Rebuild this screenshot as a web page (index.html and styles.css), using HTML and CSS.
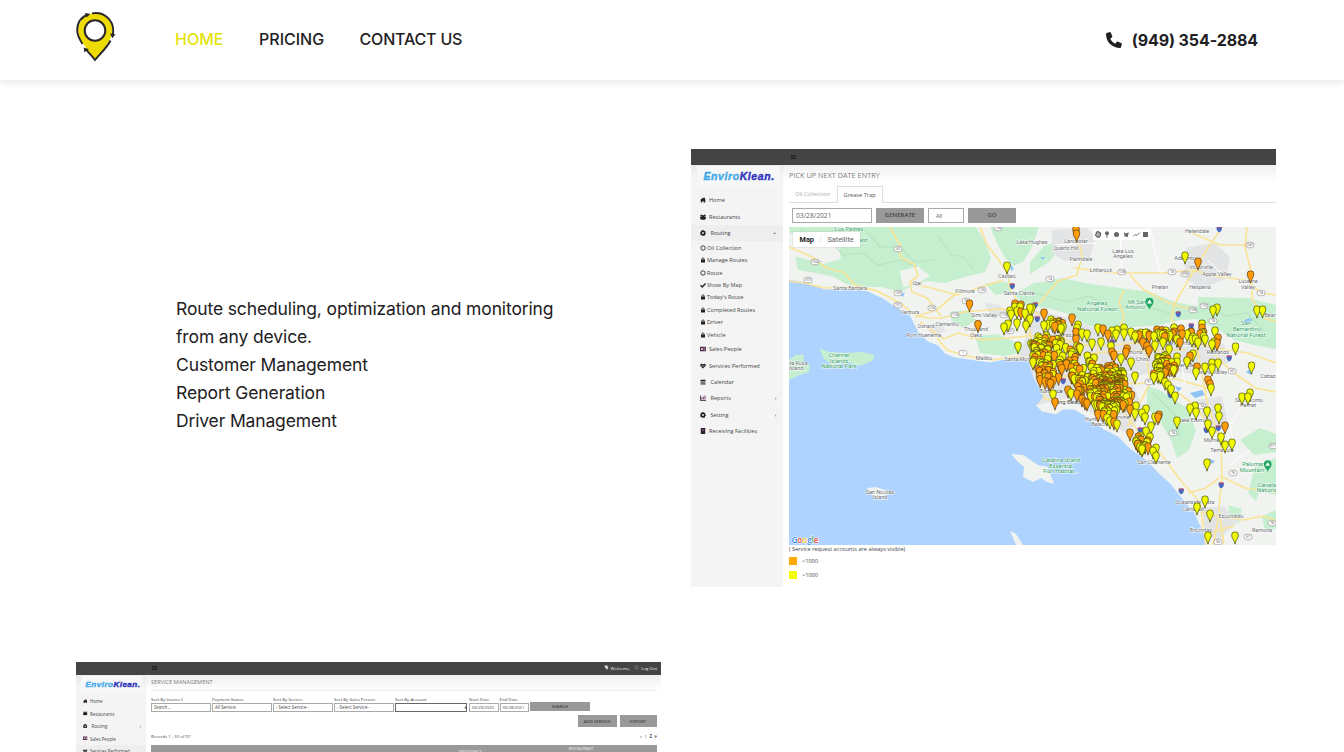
FILE: index.html
```html
<!DOCTYPE html>
<html lang="en">
<head>
<meta charset="utf-8">
<title>Route Management</title>
<link rel="stylesheet" href="styles.css">
</head>
<body>
<svg class="defs" width="0" height="0">
  <symbol id="home" viewBox="0 0 12 12"><path d="M0 6.500 6 1l2 1.800V1.500h2v3.100l2 1.900h-1.600V11H7.200V8H4.800v3H1.600V6.500z"/></symbol>
  <symbol id="users" viewBox="0 0 12 12"><circle cx="2.500" cy="3" r="1.800"/><circle cx="9.500" cy="3" r="1.800"/><circle cx="6" cy="4.500" r="2.400"/><path d="M0 9V5.500h12V9h-1.500v2.500h-9V9z"/></symbol>
  <symbol id="gear" viewBox="0 0 12 12"><path fill-rule="evenodd" d="M5 0h2l.4 1.600 1.300.5L10 1.300 11 3l-.8 1.200.3 1.100L12 6v1.600l-1.700.4-.5 1L10.500 10.500 9 11.500l-1.300-.8L7 12H5l-.6-1.500-1.300-.4L1.700 11 .6 9.300 1.500 8 1.200 7 0 6.500V5l1.500-.5.6-1.200L1.400 2 3 .8l1.300.8zM6 4.200a1.800 1.800 0 1 0 0 3.600 1.800 1.800 0 0 0 0-3.600z"/></symbol>
  <symbol id="ring" viewBox="0 0 12 12"><circle cx="6" cy="6" r="4.400" fill="none" stroke="#222" stroke-width="1.700"/></symbol>
  <symbol id="lock" viewBox="0 0 12 12"><path d="M2 5h8v6H2z"/><path d="M3.800 5.500V4a2.200 2.200 0 0 1 4.400 0v1.500" fill="none" stroke="#222" stroke-width="1.600"/></symbol>
  <symbol id="check" viewBox="0 0 12 12"><path d="m1 6.500 3.500 3.300L11 3" fill="none" stroke="#222" stroke-width="2.800"/></symbol>
  <symbol id="card" viewBox="0 0 12 12"><path d="M0 1.500h12v9H0z" fill="#4c2847"/><path d="M2 4h3.500v4H2zm5-.5h3.500v1H7zm0 2h3.500v1H7zm0 2h3.500v1H7z" fill="#d8c7d8"/></symbol>
  <symbol id="heart" viewBox="0 0 12 12"><path d="M6 11 .8 6C-.8 3 2.500-.5 6 3c3.500-3.500 6.800 0 5.200 3z"/><path d="M1 6h3l1-1.500L6.500 8l1-2H11" fill="none" stroke="#ddd" stroke-width=".8"/></symbol>
  <symbol id="calendar" viewBox="0 0 12 12"><path d="M1 1.500h10v3H1z"/><path d="M1 5h10v6.500H1z" fill="#777"/></symbol>
  <symbol id="chart" viewBox="0 0 12 12"><path d="M0 1h1.500v9H12v1.300H0z"/><path d="M2.500 5h2v4h-2zm3-2h2v6h-2zm3.500-2h2v8H9z" fill="#753566"/></symbol>
  <symbol id="building" viewBox="0 0 12 12"><path d="M1.500 0h9v12h-9z" fill="#302232"/><path d="M4 2h1.500v1H4zm2.700 0h1.500v1H6.700zM4 5h4v1H4z" fill="#978b99"/></symbol>
  <symbol id="pin-yellow" viewBox="0 0 8 14"><path d="M4 13.400C3.500 9.500.5 7.200.5 4a3.500 3.500 0 0 1 7 0C7.500 7.200 4.500 9.500 4 13.400z" fill="#f1fb00" stroke="#3b3d12" stroke-width=".7"/></symbol>
  <symbol id="pin-orange" viewBox="0 0 8 14"><path d="M4 13.400C3.500 9.500.5 7.200.5 4a3.500 3.500 0 0 1 7 0C7.500 7.200 4.500 9.500 4 13.400z" fill="#ff9d08" stroke="#4a3010" stroke-width=".7"/></symbol>
  <symbol id="shield" viewBox="0 0 8 8"><path d="M1 1q3-1 6 0c1 3-.5 5.500-3 7C1.500 6.500 0 4 1 1z" fill="#4668c0"/><path d="M1 1q3-1 6 0v1H1z" fill="#c4455a"/></symbol>
  <symbol id="park" viewBox="0 0 8 12"><path d="M4 11.500C3.500 8.500.3 7 .3 4a3.700 3.700 0 0 1 7.400 0c0 3-3.200 4.500-3.700 7.500z" fill="#21a663"/><path d="M4 1.800 6.200 5.500H1.800z" fill="#fff"/></symbol>
</svg>

<header class="site-header">
  <div class="container bar">
    <a class="logo" href="#">
      <svg width="40" height="50" viewBox="0 0 40 50">
        <path d="M19 48C14 40 2 28 2 18.500a17 17 0 0 1 34.500 0C36.500 28 25 40 19 48z" fill="#eedc00"/>
        <path d="M6.500 32C3 26.500 1.200 22.500 1.200 18.500 1.200 10 6 4.500 12.500 2.400" fill="none" stroke="#2a252b" stroke-width="1.900"/>
        <path d="M16 1.400C28-.8 37.200 8 37.200 18.500q0 2-.4 4" fill="none" stroke="#2a252b" stroke-width="1.900"/>
        <path d="M34.500 28.500C31.500 35 24 42 19 48c-2.500-3.500-6-6.500-8.800-10.500" fill="none" stroke="#2a252b" stroke-width="1.900"/>
        <path d="m9 1 5.300 1-4 3.500zM34 21.500l5.500.8-3.200 4zM7.700 35.500l5.300 1.700-4.700 3z" fill="#2a252b"/>
        <circle cx="19" cy="18.500" r="10.300" fill="#fff" stroke="#2a252b" stroke-width="2"/>
      </svg>
    </a>
    <nav class="nav">
      <a class="nav-home" href="#">HOME</a>
      <a class="nav-pricing" href="#">PRICING</a>
      <a class="nav-contact" href="#">CONTACT US</a>
    </nav>
    <a class="phone" href="#">
      <svg width="16" height="16" viewBox="0 0 16 16"><path d="M.2 1.200 3.800.1q.6-.1.900.4l1.600 3.800q.2.500-.2.900L4.300 6.700c1 2.200 2.700 3.900 4.900 5l1.600-1.900q.4-.4.900-.2l3.800 1.600q.5.300.4.900l-1.100 3.300q-.2.600-.8.600C6 15.800 0 10 0 2q0-.6.200-.8z" fill="#222023"/></svg>
      <span>(949) 354-2884</span>
    </a>
  </div>
</header>

<main class="container features">
  <div class="row">
    <div class="copy">
      <p class="c1">Route scheduling, optimization and monitoring<br>from any device.</p>
      <p>Customer Management</p>
      <p>Report Generation</p>
      <p class="c4">Driver Management</p>
    </div>

    <div class="app app-routes">
      <div class="topbar"><i class="burger"></i></div>
      <div class="app-body">
        <aside class="side">
          <div class="brand"><span>Enviro</span><b>Klean.</b></div>
          <div class="item"><svg><use href="#home"/></svg>Home</div>
          <div class="item"><svg><use href="#users"/></svg>Restaurants</div>
          <div class="item open"><svg><use href="#gear"/></svg><span class="push">Routing</span><em class="down">⌄</em></div>
          <div class="item sub"><svg><use href="#ring"/></svg>Oil Collection</div>
          <div class="item sub"><svg><use href="#lock"/></svg>Manage Routes</div>
          <div class="item sub"><svg><use href="#ring"/></svg>Route</div>
          <div class="item sub"><svg><use href="#check"/></svg>Show By Map</div>
          <div class="item sub"><svg><use href="#lock"/></svg>Today's Route</div>
          <div class="item sub"><svg><use href="#lock"/></svg>Completed Routes</div>
          <div class="item sub"><svg><use href="#lock"/></svg>Driver</div>
          <div class="item sub"><svg><use href="#lock"/></svg>Vehicle</div>
          <div class="item"><svg><use href="#card"/></svg>Sales People</div>
          <div class="item"><svg><use href="#heart"/></svg>Services Performed</div>
          <div class="item"><svg><use href="#calendar"/></svg><span class="push">Calendar</span></div>
          <div class="item"><svg><use href="#chart"/></svg><span class="push">Reports</span><em>‹</em></div>
          <div class="item"><svg><use href="#gear"/></svg><span class="push">Setting</span><em>‹</em></div>
          <div class="item"><svg><use href="#building"/></svg>Receiving Facilities</div>
        </aside>
        <section class="content">
          <h2>PICK UP NEXT DATE ENTRY</h2>
          <div class="tabs"><span>Oil Collection</span><span class="active">Grease Trap</span></div>
          <div class="filters">
            <span class="field date">03/28/2021</span><span class="btn gen">GENERATE</span><span class="field all">All</span><span class="btn go">GO</span>
          </div>
          <div class="map">
            <svg class="map-art" width="487" height="318" viewBox="789 227 487 318">
              <rect x="789" y="227" width="487" height="318" fill="#f1f3f0"/>
              <g fill="#c6efcf">
                <path d="M789 227H976l9 14 6 17-6 14-20 5-20 6-18-2-16 5-10 6-20-5-20 0-15-3-12-7-18-4-18-3z"/>
                <path d="M990 227h49l-7 20-8 14-10 5-9-8-7-13z"/>
                <path d="M1030 262l14-16 12-4 3 8-10 12-19 12z"/>
                <path d="M1014 294l20-11 10-1 18-4 28 6 30 4 30 4 24 10 26 5 0 12-20 1-20 5-40 3-30-2-22-12-20-6-24-3z"/>
                <path d="M1198 297l50 1 28 7v44l-22-4-20-5-15-10-20-10z"/>
                <path d="M1147 386l13 4 15 10 12 8 9 22-7 20-12 8-6-18-12-20-12-12z"/>
                <path d="M975 336l22-2 18 8 10 10-20 4-25-3zM950 312l18-2 8 10-12 8-12-5zM985 283l22-1 4 10-16 3zM1240 440l20-12 16 6v18l-22 3zM1255 466l21-8v37l-16-4-4 10-8-8zM1070 390l8 6-6 4zM1228 505l14 4-3 14-9-7zM1262 516l14-6v18l-11 4zM1098 396l8-6 9 8-9 6z"/>
              </g>
              <g fill="#f1f3f0">
                <path d="M789 233l26 4 24 10 2 12-18 5-22-6-12-3z"/><path d="M900 271l18-5 12 10-14 8-13 3zM850 230l8 3-3 4z"/>
              </g>
              <g fill="#e2e4e5">
                <path d="M1052 230l34-2 10 8-6 22-26 3-12-8zM1186 248l28-5 16 14-4 22-26 10-16-12zM1035 310l42 10 24 12 50 12 45 2 28-2 6 18-34 12-38-4-28 8 14 32-16 24-28-16-32-20-36 8-18-34zM1196 400l26-4 6 28-16 12zM1202 508l22-2 14 16-20 18-12-6zM984 303l16 2 6 8-14 6zM925 325l16-3 5 9-14 5z"/>
              </g>
              <g fill="none" stroke="#b2dfbb" stroke-width="1.200" opacity=".7">
                <path d="M800 229l20 12 8-3 15 17 20-2 15 12 22-5 17 7M865 230l15 17 20 0 15 15 22-3M1035 293l32 9 22-6 23 13 28-5 31 10M1207 302l18 14 22-3 16 17M937 235l15 20 12 2 9 12M1153 393l22 22 5 22"/>
              </g>
              <path fill="#aed3ff" d="M789 279.500l17 3 18 7h32l12 2 15 7 13 9 13 6 4 8 6 12 9 8 10 4 7 8 10 4 21 3 14 2 24-5 14 4 6 18 8 12 1 6-7 8 6 6 14 3 7-5 11 0 14 8 16 12 14 7 13 13 17 12 10 11 13 12 12 15 11 13 9 19 3 18H789z"/>
              <g fill="#8fc4f7">
                <path d="M812 263q6-4 10-1l-7 2zM900 295l5-3-2 5zM1010 263l4 6-3 2zM1040 257h5l-2 3zM1190 393l12-3 3 5-10 3zM1175 386l7 2-4 4zM1241 322l8-4 4 2-8 4zM1208 458l7 3-3 3zM1246 372l5-4v7z"/>
              </g>
              <path fill="#c6efcf" d="M819 348l10 4 18 1 15-1 13 3-3 6-12 5-11-3-17 2-8-6zM789 360l7-5 8 0-1 7 7 3-1 7-12 4-8 4z"/>
              <path fill="#f1f3f0" d="M1011 454l12 1 15 10 10 2 3 9 3 8-7-2-6-4-8 4-10-5 1-10-6-5zM1010 531l6 3 7 11h-7zM867 488l9-1 9 3 3 4-10 4-7-4zM838 227l12 0-2 2z"/>
              <g fill="none" stroke="#f9e498" stroke-width="1.700" stroke-linejoin="round">
                <path d="M789 281l15 2 20 5 30-1 21 3 25 13 15 12 13 3 14 0 22-6 35-3 30 1 18 7 17 2M789 247l25 11 12 10 17 4 12 13 18 5M890 227l11 20-1 10 14 7 4 12-8 6 2 10 15 6 14 18M980 227l7 18 13 17 8 12 2 15 12 20 4 20M910 283l25 6 22 6 24-8 22-7M916 317l22-8 22-19M920 322l24 17 14-6 24 7 25-2 22-2M1076 227l6 30-5 18-19 6-16 19-12 13-8 14M1074 268l40 5 50 0 30-3 20 6 32 4 15 13 15 2M1222 227l-20 30-12 20-16 28-3 15 15 14 13 22M1130 275l14 15 23 12 14 5 15 2M1120 327l4-10-5-15 5-12M1247 227l-2 20 7 28 0 24 14 20 10 2M1185 230l35 15 30 0M937 338l10 12 20 6 25 4 20-3 15 1M971 340l4-14"/>
                <path d="M1026 315l8 35 6 25 5 24 22 3M1025 335l32 4 34 7 50-3 55 0 30 7 22 3 28 10M1035 355l40 0 40-4 70-1M1060 325l12 30 5 45M1050 350l25 14 24 20 26 30 17 22 17 20M1042 375l60 3 34 6 40-5 35 10M1098 345l-3 60 15 19M1145 343l5 40-22 43M1197 345l5 30 6 30 13 37 1 35-3 30 5 39M1177 392l20 15 13 22M1158 450l24 32 18 20 6 43M1188 493l18-5 13-10M1220 476l25 12 31 4M1210 350l20 20 25 18 21 4M1197 510l20 6 26 4 20-4 13 5M1219 515l-6 30M1204 534l30-8"/>
              </g>
              <g fill="none" stroke="#fff" stroke-width="1"><path d="M1055 245l40-2M1120 230l2 42M1150 228l10 45M1208 260l20 20M1240 410l-10 15 4 20M1055 365l80 8M1070 380l60 3M1180 355l5 30M1250 450l-20 15"/></g>
              <g id="road-signs"></g>
              <g id="places" class="places"></g>
              <use href="#park" x="1145" y="297.500" width="9" height="13"/><use href="#park" x="1263.500" y="460" width="8.500" height="12.500"/>
              <g id="pins"></g>
              <text x="791.500" y="543" class="google"><tspan fill="#4285f4">G</tspan><tspan fill="#ea4335">o</tspan><tspan fill="#f4bd18">o</tspan><tspan fill="#4285f4">g</tspan><tspan fill="#34a853">l</tspan><tspan fill="#ea4335">e</tspan></text>
            </svg>
            <div class="map-type"><b>Map</b><span>Satellite</span></div>
            <svg class="draw-tools" viewBox="0 0 57 11" width="57" height="11"><g fill="#666"><path d="M3.200 5V3.200h1V2.500h1.200v.6h1.100v.7h1V6l-.9 2.200H4L2.300 6z" fill="#aaa" stroke="#444" stroke-width=".9"/><circle cx="14" cy="4.200" r="2"/><path d="M13.500 5h1v3.800h-1z"/><circle cx="23.500" cy="5.500" r="2.500"/><path d="m30.800 3.200 2 1.300 3-1.300-1 5-2-1-1 1z"/><path d="m40 7.500 2-2 2 1 3-3" fill="none" stroke="#777"/><path d="M50 3h5v5h-5z"/></g></svg>
          </div>
          <div class="legend">
            <p>( Service request accounts are always visible)</p>
            <div><i class="lo"></i>&lt;1000</div>
            <div><i class="hi"></i>&gt;1000</div>
          </div>
        </section>
      </div>
    </div>
  </div>

  <div class="row">
    <div class="app app-service">
      <div class="topbar"><i class="burger"></i><span class="user"><svg viewBox="0 0 10 10"><path d="M1 1h6v2h2L7 5l2 2-3 2-4-4z" fill="#ddd"/></svg>Welcome,</span><span class="out"><svg viewBox="0 0 10 10"><circle cx="5" cy="5" r="3.500" fill="none" stroke="#aaa"/></svg>Log Out</span></div>
      <div class="app-body">
        <aside class="side">
          <div class="brand"><span>Enviro</span><b>Klean.</b></div>
          <div class="item"><svg><use href="#home"/></svg>Home</div>
          <div class="item"><svg><use href="#users"/></svg>Restaurants</div>
          <div class="item"><svg><use href="#gear"/></svg><span class="push">Routing</span><em>‹</em></div>
          <div class="item"><svg><use href="#card"/></svg>Sales People</div>
          <div class="item open"><svg><use href="#heart"/></svg>Services Performed</div>
        </aside>
        <section class="content">
          <h2>SERVICE MANAGEMENT</h2>
          <div class="search">
            <label>Sort By Invoice#<span class="field w60 hint">Search...</span></label>
            <label>Payment Status<span class="field w60">All Service</span></label>
            <label>Sort By Service<span class="field w60">- Select Service -</span></label>
            <label>Sort By Sales Person<span class="field w60">- Select Service -</span></label>
            <label>Sort By Account<span class="field account"><em>▾</em></span></label>
            <label class="start">Start Date<span class="field w29">03/29/2020</span></label>
            <label>End Date<span class="field w29">03/28/2021</span></label>
            <span class="btn find">SEARCH</span>
          </div>
          <div class="actions"><span class="btn">ADD SERVICE</span><span class="btn exp">EXPORT</span></div>
          <div class="records"><span>Records 1 - 50 of 97</span><span class="pager"><i>«</i><i>1</i><b>2</b><b>»</b></span></div>
          <div class="thead"><span class="th1">FREQUENCY</span><span class="th2">RESTAURANT</span></div>
        </section>
      </div>
    </div>
  </div>
</main>
<script src="map.js"></script>
</body>
</html>
```
FILE: styles.css
```css
* { box-sizing: border-box; }
html { overflow: hidden; }
body { margin: 0; height: 752px; overflow: hidden; background: #fff; color: #222023; font-family: Inter, "Open Sans", sans-serif; }
a { color: inherit; text-decoration: none; }
p, h2 { margin: 0; font-weight: 400; }
.defs { display: block; height: 0; }
.container { width: 1200px; margin-left: 76px; }

.site-header { height: 80px; background: #fff; box-shadow: 0 0 10px rgba(0,0,0,.15); }
.bar { height: 80px; display: flex; align-items: center; }
.logo { width: 99px; height: 50px; margin-top: -7px; }
.logo svg { display: block; }
.nav { display: flex; gap: 35px; margin-top: -2px; font-size: 16px; font-weight: 500; line-height: 24px; white-space: nowrap; }
.nav a { display: block; }
.nav-home { width: 49px; color: #e3e30b; letter-spacing: 0; }
.nav-pricing { width: 65.500px; letter-spacing: 0; }
.nav-contact { letter-spacing: -.18px; }
.phone { margin-left: auto; margin-right: 18px; display: flex; gap: 10px; align-items: center; font-size: 16px; font-weight: 700; letter-spacing: -.1px; }

.features { padding-top: 69px; display: flex; flex-direction: column; gap: 75px; height: 672px; overflow: hidden; }
.row { display: flex; gap: 30px; align-items: center; flex: none; }
.copy { width: 585px; padding-left: 100px; padding-bottom: 6px; font-size: 17.500px; line-height: 28px; letter-spacing: -.1px; white-space: nowrap; }
.c1 { letter-spacing: -.13px; }
.c4 { letter-spacing: -.15px; }

.app { width: 585px; font-family: "Open Sans", sans-serif; color: #444; overflow: hidden; flex: none; }
.topbar { background: #444; display: flex; align-items: center; color: #eee; }
.burger { width: 5px; height: 4px; border-top: 1px solid #222; border-bottom: 1px solid #222; background: #333; }
.app-body { display: flex; }
.side { flex: none; background: linear-gradient(#e9e9e9, #f4f4f4 12px); white-space: nowrap; }
.brand { font-family: "Liberation Sans", sans-serif; font-style: italic; font-weight: 700; background: #f7f7f7; -webkit-text-stroke: .4px; }
.brand span { color: #42a9e8; }
.brand b { color: #3034bd; }
.item { display: flex; align-items: center; }
.item svg { flex: none; fill: #222; }
.item em { margin-left: auto; font-style: normal; }
.item .down { margin-top: -3px; }
.item.open { background: #eee; }
.content { flex: 1; background: linear-gradient(#f0f0f0, #fff 16px); white-space: nowrap; }
.content h2 { color: #7d7d7d; }
.btn { background: #999; color: #444; text-align: center; font-weight: 600; }
.field { border: 1px solid #aaa; background: #fff; color: #666; display: block; }

.app-routes { height: 438px; }
.app-routes .topbar { height: 16px; padding-left: 100px; }
.app-routes .side { width: 92px; height: 422px; font-size: 5.600px; }
.app-routes .brand { height: 20px; line-height: 21px; font-size: 10.500px; margin: 1px 3px 6.300px 6px; padding-left: 6.500px; letter-spacing: .58px; }
.app-routes .item { height: 16.400px; padding: 0 6.500px 0 9px; gap: 3px; }
.app-routes .item svg { width: 6px; height: 6px; }
.app-routes .item.sub { height: 12.450px; gap: 1px; }
.push { padding-left: 1.500px; }
.app-routes .content { height: 422px; padding-left: 6px; }
.app-routes h2 { font-size: 7.200px; letter-spacing: .06px; line-height: 18px; height: 20.500px; padding-top: 1px; }
.tabs { height: 17px; border-bottom: 1px solid #ddd; display: flex; font-size: 5.700px; line-height: 16px; color: #aaa; padding-left: 6px; }
.tabs span:first-child { width: 41.500px; }
.tabs .active { width: 46px; height: 17px; border: 1px solid #ddd; border-bottom: 0; background: #fff; color: #555; padding-left: 6px; }
.filters { display: flex; gap: 4px; height: 24.500px; padding: 5px 0 4.500px 3px; font-size: 6px; line-height: 13px; }
.app-routes .date { width: 80px; padding-left: 3px; font-size: 6.700px; }
.app-routes .gen { width: 48px; line-height: 15px; }
.app-routes .all { width: 36px; padding-left: 7px; font-size: 5.500px; line-height: 14px; }
.app-routes .go { width: 48px; line-height: 15px; }
.map { position: relative; width: 487px; height: 318px; }
.map-art { display: block; }
.places { font-family: Roboto, sans-serif; font-size: 5.400px; fill: #676b70; text-anchor: middle; paint-order: stroke; stroke: #fff; stroke-width: .9px; }
.places .major { fill: #44474b; font-size: 6px; }
.places .nature { fill: #2c9b60; font-size: 5.800px; }
.sign { font-family: Roboto, sans-serif; font-size: 3.600px; fill: #666; text-anchor: middle; }
.google { font-family: "Open Sans", sans-serif; font-size: 8.200px; font-weight: 600; letter-spacing: -.1px; paint-order: stroke; stroke: #fff; stroke-width: 1px; }
.map-type { position: absolute; left: 4px; top: 5px; height: 14.500px; width: 67px; display: flex; align-items: center; background: #fff; font: 7.300px Roboto, sans-serif; box-shadow: 0 0 1px #aaa; color: #666; }
.map-type b { width: 27.500px; padding-left: 6.500px; color: #222; border-right: 1px solid #eee; }
.map-type span { padding-left: 7px; }
.draw-tools { position: absolute; left: 304px; top: 2px; background: #fff; }
.legend { font-size: 5.600px; padding-left: 0; }
.legend p { line-height: 9px; height: 9px; }
.legend div { display: flex; align-items: center; gap: 5px; height: 14px; }
.legend i { width: 8px; height: 8px; background: #ffa900; }
.legend .hi { background: #f1ff00; }

.app-service { height: 330px; font-size: 4.300px; }
.app-service .topbar { height: 12.500px; padding: 0 4px 0 76px; }
.app-service .topbar svg { width: 5px; height: 5px; margin-right: 2px; }
.app-service .user { margin-left: auto; margin-right: 4px; }
.app-service .side { width: 70px; height: 320px; font-size: 4.400px; }
.app-service .brand { height: 16px; line-height: 17px; font-size: 8.100px; margin: 1px 3px 3.300px 5px; padding-left: 4.500px; letter-spacing: .45px; }
.app-service .item { height: 12.500px; padding: 0 5px 0 7px; gap: 2.500px; }
.app-service .item svg { width: 4.500px; height: 4.500px; }
.app-service .content { padding: 0 4px 0 5px; }
.app-service h2 { font-size: 5.600px; line-height: 15px; height: 16px; border-bottom: 1px solid #eee; }
.search { display: flex; gap: 1px; padding-top: 5px; height: 22.500px; }
.search label { line-height: 6px; display: block; }
.search .field { height: 9px; line-height: 7.500px; margin-top: 1px; padding-left: 2px; font-size: 4.400px; color: #444; border-width: .8px; }
.w60 { width: 60px; }
.hint { font-style: italic; }
.search .account { width: 72px; border: 1px solid #666; text-align: right; }
.search .start { margin-left: 1px; }
.w29 { width: 29.500px; }
.search .w29 { font-size: 4.100px; }
.find { width: 60px; height: 9px; margin-top: 6.500px; line-height: 9px; }
.actions { display: flex; justify-content: flex-end; gap: 3px; padding: 2px .5px 0 0; height: 14px; }
.actions .btn { width: 38.500px; height: 12px; line-height: 12px; }
.actions .exp { width: 37px; }
.records { display: flex; height: 18px; line-height: 19px; }
.pager { margin-left: auto; display: flex; gap: 2.500px; }
.pager i { font-style: normal; }
.thead { height: 60px; background: #999; color: #eee; display: flex; font-size: 4px; line-height: 7px; }
.th1 { margin-left: 308px; padding-top: 2.500px; }
.th2 { margin-left: 87px; }
```
FILE: map.js
```js
const NS = 'http://www.w3.org/2000/svg';
const add = (parent, tag, attrs, text) => {
  const el = document.createElementNS(NS, tag);
  for (const k in attrs) el.setAttribute(k, attrs[k]);
  if (text) el.textContent = text;
  parent.appendChild(el);
};

// Place labels: centre x, baseline y, text, kind
const places = [
  [849,231,'Los Padres','nature'],[848,242,'National Forest','nature'],[850,290,'Santa Barbara',''],[917,285,'Ojai',''],[910,314,'Ventura',''],
  [926,328,'Oxnard',''],[947,325.5,'Camarillo',''],[924,337,'Port Hueneme',''],[965,293,'Fillmore',''],[984,316.5,'Simi Valley',''],
  [976,330.5,'Thousand',''],[976,337,'Oaks',''],[984,359.5,'Malibu',''],[1007,278,'Castaic',''],[1019,295,'Santa Clarita',''],[1032,244,'Lake Hughes',''],
  [1021,360.5,'Santa Monica',''],[1076,242.5,'Lancaster',''],[1066,249.500,'Quartz Hill',''],[1081,261,'Palmdale',''],[1101,271.5,'Littlerock',''],
  [1123,253,'Lake Los',''],[1123,258,'Angeles',''],[1160,288.5,'Phelan',''],[1200,288.5,'Hesperia',''],[1197,233,'Helendale',''],[1185,260,'Adelanto',''],
  [1201,269,'Victorville',''],[1217,275.500,'Apple Valley',''],[1248,283,'Lucerne',''],[1248,288.500,'Valley',''],[1097,305,'Angeles','nature'],
  [1097,310.500,'National Forest','nature'],[1137,303.500,'Mt San','nature'],[1135,309,'Antonio','nature'],[1246,325,'San','nature'],[1247,330.500,'Bernardino','nature'],
  [1246,336.500,'National Forest','nature'],[1270,317,'Bear',''],[1218,354,'Redlands',''],[1074,337,'Pasadena',''],[1058,354,'Los Angeles','major'],
  [1143,361,'Chino',''],[1132,353.500,'Pomona',''],[1184,345,'San Bernardino',''],[1184,367,'Riverside',''],[1210,374,'Moreno Valley',''],[1271,378,'Cabazon',''],
  [1051,392.5,'Torrance','major'],[1068,404,'Long Beach','major'],[1098,420.5,'Huntington',''],[1099,426,'Beach',''],[1123,419,'Irvine',''],
  [1194,422,'Lake Elsinore',''],[1249,401.500,'San Jacinto',''],[1248,407,'Hemet',''],[1214,442,'Murrieta',''],[1222,452,'Temecula',''],
  [1154,464,'San Clemente',''],[1195,504,'Oceanside  Vista',''],[1193,511,'Carlsbad',''],[1231,517.500,'Escondido',''],[1201,532,'Encinitas',''],[1262,532,'Ramona',''],
  [1253,466,'Palomar','nature'],[1252,472,'Mountain','nature'],[1270,487,'Cleveland','nature'],[1270,492,'National F','nature'],[1061,461.500,'Catalina Island','nature'],
  [1061,467.5,'Essential','nature'],[1061,473,'Fish Habitat...','nature'],[839,357,'Channel','nature'],[839,362.5,'Islands','nature'],[839,368,'National Park','nature'],
  [797,365,'nta Rosa',''],[796,370,'Island',''],[880,493.500,'San Nicolas',''],[880,498.500,'Island','']
];
const placeLayer = document.getElementById('places');
places.forEach(([x, y, t, c]) => add(placeLayer, 'text', { x, y, class: c }, t));

// Route badges
const signs = [[815,262,154],[808,280,101],[898,249,33],[898,293,150],[898,305,101],[932,308,126],[955,315,118],[982,290,126],[966,301,23],[1004,315,118],[963,353,1],[998,228,138],
  [1050,279,14],[1122,272,138],[1172,272,18],[1185,274,395],[1250,245,247],[1261,293,18],[1193,310,138],[1204,306,173],[1213,321,18],[1232,371,60],[1149,382,91],[1173,433,74],
  [1202,406,74],[1233,473,76],[1273,446,371],[1272,523,78],[1248,537,67],[1218,542,56],[1010,331,101]];
const signLayer = document.getElementById('road-signs');
signs.forEach(([x, y, n]) => {
  add(signLayer, 'rect', { x: x - 4, y: y - 2.7, width: 8, height: 5.4, rx: 2.5, fill: '#fff', stroke: '#888', 'stroke-width': .6 });
  add(signLayer, 'text', { x, y: y + 1.3, class: 'sign' }, String(n));
});
[[1012,286],[1035,305],[1037,319],[1059,320],[1219,229],[1178,314],[1191,326],[1229,358],[1181,491],[1221,485],[1112,342],[1140,430],[1206,430],[1218,428],[1170,395],[1105,392],[1063,381]]
  .forEach(([x, y]) => add(signLayer, 'use', { href: '#shield', x: x - 3, y: y - 3, width: 6.5, height: 6.5 }));

// Customer pins: head centre x, y
const yellow = [[1007,266],[1185,256],[1213,310],[1217,308],[1257,310],[1262.5,310],[1235.5,347],[1251.5,366],[1032,308],[1030,319],[1010,311],[1015,307],[1011,314],[1017,311],[1020,307],
  [1025,313],[1030,308],[1017,323],[1004,327],[1008,324],[1026,325],[1018,346],[1044,325],[1051,320],[1053,322],[1063,327],[1061,328],[1078,325],[1077,328],[1082,333],[1087,334],[1077,346],
  [1080,348],[1092,343],[1098,328],[1101,342],[1112,331],[1117,330],[1116,334],[1124,333],[1131,332],[1124,328],[1135,336],[1155,345],[1163,342],[1154,336],[1160,334],[1166,331],[1169,334],
  [1174,328],[1187,334],[1192,339],[1191,332],[1198,342],[1202,324],[1202,333],[1205,339],[1212,344],[1215,331],[1214,342],[1169,349],[1177,357],[1177,362],[1193,354],[1187,361],[1196,372],
  [1205,367],[1212,363],[1218,363],[1212,368],[1211,388],[1135,376],[1175,396],[1171,389],[1168,385],[1165,382],[1190,408],[1195,406],[1196,412],[1207,411],[1218,408],[1219,416],[1242,397],
  [1248,397],[1250,393],[1177,421],[1208,424],[1212,431],[1221,437],[1225,445],[1232,443],[1207,463],[1205,500],[1197,507],[1210,514],[1208,536],[1235,536],[1136,441],[1138,444],[1140,447],
  [1142,449],[1145,446],[1140,436],[1150,437],[1156,448],[1153,451],[1156,456],[1146,431],[1151,426],[1155,417],[1135,413],[1142,413],[1145,417],[1146,409],[1136,406],[1117,424],[1107,418],
  [1110,421],[1053,394],[1111,346],[1033,356],[1033,362],[1121,358],[1131,362],[1094,358],[1090,362],[1071,393]];
const orange = [[1076,230],[1076.5,234],[1198,262],[1250.5,275],[969.5,304],[978,324.5],[1015,304],[1021,305],[1021,312],[1044,313],[1055,323],[1058,325],[1072,318],[1076,332],[1076,339],
  [1079,347],[1103,329],[1108,334],[1139,335],[1143,342],[1149,350],[1147,346],[1157,330],[1181,329],[1182,334],[1180,342],[1202,328],[1218,338],[1217,343],[1190,356],[1197,367],[1208,380],
  [1210,384],[1225,426],[1130,433],[1141,440],[1148,441],[1148,447],[1159,415],[1158,417],[1130,409],[1114,422],[1098,414],[1087,403],[1055,402],[1114,355],[1127,349],[1126,352],[1112,352],[1175,369],
  [1068,390],[1077,394],[1082,399],[1085,402]];

// Dense areas: centre, radii, count, share of orange
const areas = [[1046,343,16,7,32,.4],[1042,356,10,10,24,.35],[1046,374,9,11,24,.6],[1064,364,12,17,20,.4],[1082,370,12,16,22,.4],[1092,388,15,12,28,.45],
  [1108,379,17,14,85,.4],[1107,394,18,14,70,.4],[1121,393,11,15,32,.45],[1109,409,10,7,22,.3],[1162,362,8,7,26,.3],[1159,374,7,4,13,.4],
  [1152,334,22,4,12,.4],[1184,335,24,5,13,.3],[1170,366,6,7,8,.4],[1055,323,8,4,7,.4],[1142,442,7,6,8,.3]];
let seed = 73;
const random = () => (seed = (seed * 16807) % 2147483647) / 2147483647;
const pins = yellow.map(p => [...p, 'yellow']).concat(orange.map(p => [...p, 'orange']));
areas.forEach(([cx, cy, rx, ry, count, share]) => {
  for (let i = 0; i < count; i++) {
    const a = random() * Math.PI * 2, r = Math.sqrt(random());
    pins.push([cx + Math.cos(a) * rx * r, cy + Math.sin(a) * ry * r, random() < share ? 'orange' : 'yellow']);
  }
});
pins.sort((a, b) => a[1] - b[1]);
const pinLayer = document.getElementById('pins');
pins.forEach(([x, y, c]) => add(pinLayer, 'use', { href: '#pin-' + c, x: x - 4, y: y - 4.7, width: 8, height: 13.5 }));
```
